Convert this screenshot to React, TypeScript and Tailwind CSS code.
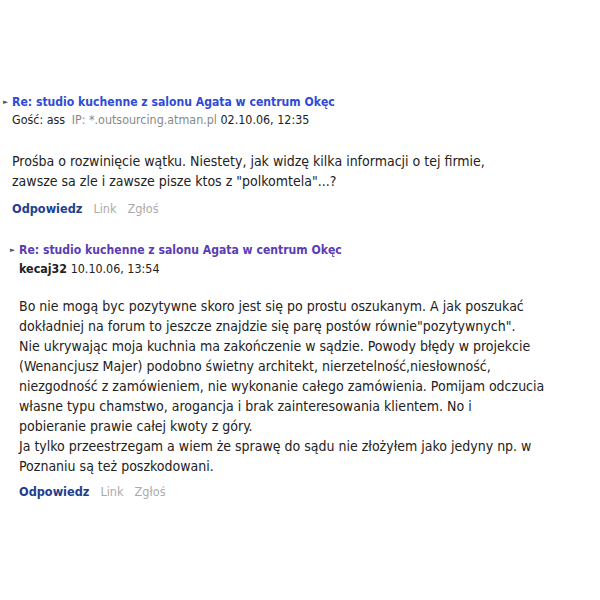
import React from 'react';

const font = { fontFamily: '"DejaVu Sans Condensed", "DejaVu Sans", sans-serif' };

type PostProps = {
  title: string;
  visited?: boolean;
  meta: React.ReactNode;
  body: string[];
  indent: string;
  metaGap: string;
  bodyGap: string;
  actionsGap: string;
};

const Post = ({ title, visited, meta, body, indent, metaGap, bodyGap, actionsGap }: PostProps) => (
  <div className={indent}>
    <div className="flex items-center h-[16px]">
      <span className="w-[9px] text-[7px] text-gray-600 leading-none">►</span>
      <span className={`text-[12.1px] leading-[16px] font-bold ${visited ? 'text-[#5a3cb4]' : 'text-[#2f4bd8]'}`}>{title}</span>
    </div>
    <div className={`pl-[9px] text-[12.4px] leading-[16px] text-[#222] ${metaGap}`}>{meta}</div>
    <div className={`pl-[9px] text-[14px] leading-[20px] text-[#222] ${bodyGap}`}>
      {body.map((l, i) => <div key={i}>{l}</div>)}
    </div>
    <div className={`pl-[9px] flex gap-[11px] text-[12.6px] leading-[16px] ${actionsGap}`}>
      <span className="font-bold text-[#1d3f8e]">Odpowiedz</span>
      <span className="text-[#aaa]">Link</span>
      <span className="text-[#aaa]">Zgłoś</span>
    </div>
  </div>
);

export default function App() {
  return (
    <div className="w-[600px] h-[600px] bg-white pt-[94px]" style={font}>
      <Post
        indent="pl-[3px]"
        metaGap="mt-[2px]"
        bodyGap="mt-[23px]"
        actionsGap="mt-[10px]"
        title="Re: studio kuchenne z salonu Agata w centrum Okęc"
        meta={<><span>Gość: ass</span> <span className="text-[#888] ml-[3px]">IP: *.outsourcing.atman.pl</span> <span>02.10.06, 12:35</span></>}
        body={['Prośba o rozwinięcie wątku. Niestety, jak widzę kilka informacji o tej firmie,', 'zawsze sa zle i zawsze pisze ktos z "polkomtela"...?']}
      />
      <div className="h-[25px]" />
      <Post
        indent="pl-[10px]"
        metaGap="mt-[3px]"
        bodyGap="mt-[19px]"
        actionsGap="mt-[8px]"
        visited
        title="Re: studio kuchenne z salonu Agata w centrum Okęc"
        meta={<><span className="font-bold">kecaj32</span> <span>10.10.06, 13:54</span></>}
        body={[
          'Bo nie mogą byc pozytywne skoro jest się po prostu oszukanym. A jak poszukać',
          'dokładniej na forum to jeszcze znajdzie się parę postów równie"pozytywnych".',
          'Nie ukrywając moja kuchnia ma zakończenie w sądzie. Powody błędy w projekcie',
          '(Wenancjusz Majer) podobno świetny architekt, nierzetelność,niesłowność,',
          'niezgodność z zamówieniem, nie wykonanie całego zamówienia. Pomijam odczucia',
          'własne typu chamstwo, arogancja i brak zainteresowania klientem. No i',
          'pobieranie prawie całej kwoty z góry.',
          'Ja tylko przeestrzegam a wiem że sprawę do sądu nie złożyłem jako jedyny np. w',
          'Poznaniu są też poszkodowani.',
        ]}
      />
    </div>
  );
}
